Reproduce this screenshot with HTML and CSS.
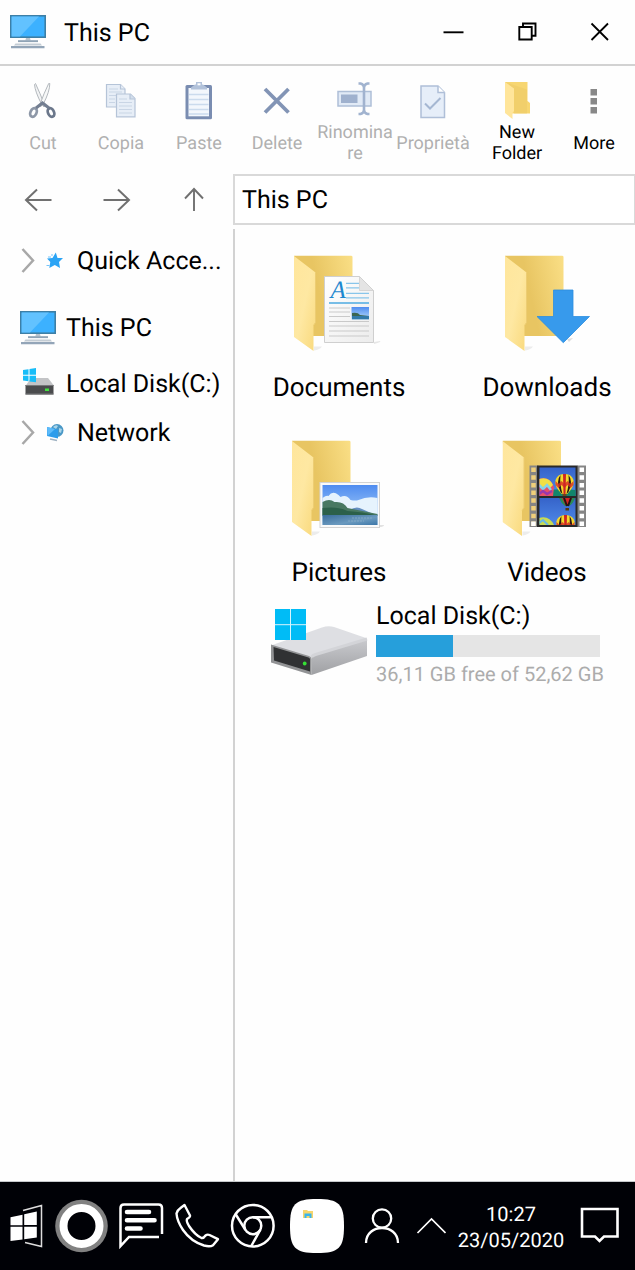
FILE: index.html
```html
<!DOCTYPE html>
<html lang="en">
<head>
<meta charset="utf-8">
<meta name="viewport" content="width=device-width, initial-scale=1">
<title>This PC</title>
<link rel="stylesheet" href="styles.css">
</head>
<body>
<svg class="defs" width="0" height="0" aria-hidden="true">
  <defs>
    <linearGradient id="back" x1="0" y1="0.3" x2="1" y2="0"><stop offset=".35" stop-color="#e8c562"/><stop offset="1" stop-color="#fadf86"/></linearGradient>
    <linearGradient id="flap" x1="0" y1="0" x2="1" y2="1"><stop offset="0" stop-color="#ffe69c"/><stop offset=".5" stop-color="#fee8a2"/><stop offset="1" stop-color="#f9d97c"/></linearGradient>
    <linearGradient id="sky" x1="0" y1="0" x2="0" y2="1"><stop offset="0" stop-color="#4f8cf0"/><stop offset="1" stop-color="#b8dcfa"/></linearGradient>
    <linearGradient id="lake" x1="0" y1="0" x2="1" y2="1"><stop offset="0" stop-color="#3a6d9c"/><stop offset=".6" stop-color="#6b9abf"/><stop offset="1" stop-color="#3d77a8"/></linearGradient>
    <linearGradient id="film" x1="0" y1="0" x2="0" y2="1"><stop offset="0" stop-color="#3562c8"/><stop offset="1" stop-color="#4f8bea"/></linearGradient>
    <linearGradient id="side" x1="0" y1="0" x2="0" y2="1"><stop offset="0" stop-color="#c9cace"/><stop offset="1" stop-color="#9fa0a3"/></linearGradient>
    <linearGradient id="paper" x1="0" y1="0" x2="1" y2="1"><stop offset="0" stop-color="#ffffff"/><stop offset="1" stop-color="#ececec"/></linearGradient>
    <symbol id="monitor" viewBox="0 0 36 34">
      <rect x="0" y="0" width="36" height="23" fill="#3d7fa6"/>
      <rect x="1.6" y="1.6" width="32.8" height="19.8" fill="#3cb1ff"/>
      <path d="M1.6 1.6H29L10 21.4H1.6Z" fill="#62c2ff"/>
      <path d="M16 23h4l.7 2.4h-5.4Z" fill="#b9c4ce"/>
      <path d="M8 25.2h20v1.9H8Z" fill="#8fa3b5"/>
      <path d="M5.500 28.400h25l1.500 2h-28Z" fill="#c3ccd4"/>
      <path d="M1 31h33.500v2.300H1Z" fill="#93a5b8"/>
    </symbol>
    <symbol id="folder" viewBox="0 0 60 97">
      <path d="M20 95q6-1 8-4h-8Z" fill="#ececec"/>
      <path d="M0 0H57q1.500 0 1.500 1.500V80.500H10Z" fill="url(#back)"/>
      <path d="M0 .5 21.500 17V67l-2 3V95.500L0 81.500Z" fill="url(#flap)"/>
      <path d="M21.500 17V67l-2 3" fill="none" stroke="#edcd73" stroke-width="1"/>
    </symbol>
    <g id="balloon">
      <path d="M0-10C7-10 10-5 9 0C8 5 4 8 3 10H-3C-4 8-8 5-9 0C-10-5-7-10 0-10Z" fill="#f4d72c"/>
      <path d="M-4-9Q-9-3-4 8L-2 10Q-5 0-4-9ZM4-9Q9-3 4 8L2 10Q5 0 4-9Z" fill="#2b1717"/>
      <path d="M-9-3l3 3 3-3 3 3 3-3 3 3 3-3v4l-3 3-3-3-3 3-3-3-3 3-3-3Z" fill="#d92d24" opacity=".8"/>
      <path d="M-1.500-10h3L1 10h-2Z" fill="#ce2525"/>
      <path d="M-2 10h4v3h-4Z" fill="#70471e"/>
    </g>
  </defs>
</svg>

<div class="window">
  <header class="titlebar">
    <svg class="pc-icon" aria-hidden="true"><use href="#monitor"/></svg>
    <h1 class="title">This PC</h1>
    <div class="controls">
      <button type="button" class="control" aria-label="Minimize"><svg class="glyph" viewBox="437 13 36 36"><path d="M443.500 31.300h20" stroke="#000" stroke-width="1.900"/></svg></button>
      <button type="button" class="control" aria-label="Restore"><svg class="glyph" viewBox="509 13 36 36"><path d="M519.300 26h12.400v12.500h-12.400ZM523 26v-3.500h12.500V34.800H532" fill="none" stroke="#000" stroke-width="1.900"/></svg></button>
      <button type="button" class="control" aria-label="Close"><svg class="glyph" viewBox="581 13 36 36"><path d="M591.500 22.500l16.500 16.500M608 22.500l-16.500 16.500" stroke="#000" stroke-width="1.800"/></svg></button>
    </div>
  </header>

  <div class="toolbar" role="toolbar" aria-label="File actions">
    <button type="button" class="tool" disabled>
      <svg class="tool-icon" viewBox="21 79 44 44" aria-hidden="true">
        <path d="M34.500 84.500q.5 7 7 19.500l2.500 3 .8-1.500Q40 93 35.500 83.500Z" fill="#f2f3f4" stroke="#b3b8bd" stroke-width="1"/>
        <path d="M49.800 83.500q0 8-6.500 20.500l-3 3-.8-1.500Q44 93 48.700 83.500Z" fill="#f7f8f8" stroke="#b3b8bd" stroke-width="1"/>
        <ellipse cx="33.500" cy="112.500" rx="3" ry="4.500" transform="rotate(25 33.500 112.500)" fill="none" stroke="#8d97a7" stroke-width="2.800"/>
        <ellipse cx="51" cy="112.500" rx="3" ry="4.500" transform="rotate(-25 51 112.500)" fill="none" stroke="#6b778b" stroke-width="2.800"/>
        <path d="M36 108l6.500-5 6.500 5" fill="none" stroke="#737e91" stroke-width="3"/>
      </svg>
      <span class="tool-label">Cut</span>
    </button>
    <button type="button" class="tool" disabled>
      <svg class="tool-icon" viewBox="99 79 44 44" aria-hidden="true">
        <g stroke="#b5c4d8" stroke-width="1.200" fill="#e7eef7">
          <path d="M106.500 84.500h14l4.500 4.500v18h-18.500Z"/><path d="M120.500 84.500v4.500h4.500"/>
          <path d="M109 89h9M109 92h13M109 95.500h13M109 99h6M109 102.500h6" stroke="#c9d5e5"/>
          <path d="M116.500 94h14l4.500 4.500v18.300h-18.500Z"/><path d="M130 94v5h5" fill="#d3deec"/>
          <path d="M119 99h8M119 102.500h13M119 106h13M119 109.500h13M119 113h13" stroke="#c9d5e5"/>
        </g>
      </svg>
      <span class="tool-label">Copia</span>
    </button>
    <button type="button" class="tool" disabled>
      <svg class="tool-icon" viewBox="177 79 44 44" aria-hidden="true">
        <rect x="185.500" y="85" width="26.500" height="34.300" rx="1.500" fill="#7a8db1"/>
        <path d="M188.500 88h20.500v28.300h-20.500Z" fill="#f3f7fc"/>
        <path d="M189 94.500h19.500M189 99.500h19.500M189 104.500h19.500M189 109.500h19.500M189 114h19.500" stroke="#cbdbed" stroke-width="1.600"/>
        <path d="M191 89.500v-2l4-3h1v-2.500h6v2.500h1l4 3v2Z" fill="#b2c2da"/>
        <path d="M197.500 83.300h3v2h-3Z" fill="#fff"/>
      </svg>
      <span class="tool-label">Paste</span>
    </button>
    <button type="button" class="tool" disabled>
      <svg class="tool-icon" viewBox="255 79 44 44" aria-hidden="true"><path d="M265 89l23.500 23.500M288.500 89L265 112.500" stroke="#8294b5" stroke-width="3.800"/></svg>
      <span class="tool-label">Delete</span>
    </button>
    <button type="button" class="tool" disabled>
      <svg class="tool-icon" viewBox="333 79 44 44" aria-hidden="true">
        <rect x="338" y="91.500" width="33" height="14.500" fill="#e1eaf6" stroke="#aebfd7" stroke-width="1.500"/>
        <rect x="341" y="94.500" width="16.500" height="8.500" fill="#9fb1ce"/>
        <path d="M358.500 83.500h2q3.500 1 3.500 4V110q0 3-3.500 4h-2M369.500 83.500h-2q-3.500 1-3.500 4M364 110q0 3 3.500 4h2" fill="none" stroke="#a1b3cf" stroke-width="2.600"/>
      </svg>
      <span class="tool-label">Rinominare</span>
    </button>
    <button type="button" class="tool" disabled>
      <svg class="tool-icon" viewBox="411 79 44 44" aria-hidden="true">
        <path d="M421 86h17l6.500 6.500v25H421Z" fill="#e6eef9" stroke="#afbfd8" stroke-width="1.500"/>
        <path d="M438 86v6.500h6.500" fill="#fff" stroke="#afbfd8" stroke-width="1.500"/>
        <path d="M425 103.500l5 5 10.500-10.500" fill="none" stroke="#a5b7d2" stroke-width="2"/>
      </svg>
      <span class="tool-label">Proprietà</span>
    </button>
    <button type="button" class="tool">
      <svg class="tool-icon" viewBox="495 79 44 44" aria-hidden="true">
        <path d="M505 82h22.500v19l2.500 2v10.500h-20Z" fill="#f7d671"/>
        <path d="M505 82l9 7v24.500h13v-24" fill="#eccb66" opacity=".55"/>
        <path d="M505 82l9 6.500V111l-1.500 2v6L505 113Z" fill="#ffe59a"/>
      </svg>
      <span class="tool-label">New Folder</span>
    </button>
    <button type="button" class="tool">
      <svg class="tool-icon" viewBox="572 79 44 44" aria-hidden="true"><path d="M590.500 89h6.500v6.500h-6.500ZM590.500 98h6.500v6.500h-6.500ZM590.500 107h6.500v6.500h-6.500Z" fill="#888"/></svg>
      <span class="tool-label">More</span>
    </button>
  </div>

  <div class="address-row">
    <nav class="history" aria-label="History">
      <button type="button" class="arrow" aria-label="Back"><svg class="glyph" viewBox="21 182 36 36"><path d="M52.500 200H27M38 189.500L27 200l11 10.500" fill="none" stroke="#707070" stroke-width="2"/></svg></button>
      <button type="button" class="arrow" aria-label="Forward"><svg class="glyph" viewBox="98 182 36 36"><path d="M103.500 200H129M118 189.500L129 200l-11 10.500" fill="none" stroke="#707070" stroke-width="2"/></svg></button>
      <button type="button" class="arrow" aria-label="Up"><svg class="glyph" viewBox="176 182 36 36"><path d="M194 211V189M185 198.500l9-9.500 9 9.500" fill="none" stroke="#707070" stroke-width="1.900"/></svg></button>
    </nav>
    <input class="address" type="text" value="This PC" aria-label="Address">
  </div>

  <div class="body">
    <nav class="sidebar" aria-label="Folders">
      <a class="branch" href="#quick">
        <svg class="branch-icon" viewBox="20 244 48 34" aria-hidden="true">
          <path d="M22.500 249l10.500 11.500L22.500 272" fill="none" stroke="#a8a8a8" stroke-width="2.500"/>
          <path d="M55.800 252.500l1.700 5.500h5.500l-4 4 1 6-5.200-3-5.500 3 1-6-3.300-3.500 5.500-.5Z" fill="#2ba4f5"/>
          <path d="M48 257h3M46.500 265.500h3M51 255h2" stroke="#74c4fa" stroke-width="1"/>
        </svg>
        <span class="place-text">Quick Acce...</span>
      </a>
      <a class="place" href="#pc">
        <svg class="pc-icon" aria-hidden="true"><use href="#monitor"/></svg>
        <span class="place-text">This PC</span>
      </a>
      <a class="place" href="#disk">
        <svg class="pc-icon" viewBox="20 366 36 34" aria-hidden="true">
          <path d="M31 377h17l5.500 7v1h-28Z" fill="#c3c4c6"/>
          <rect x="25.500" y="384" width="28" height="9.500" fill="#4a4b4d"/>
          <path d="M25.500 384.500h28M25.500 393h28" stroke="#77787a" stroke-width="1"/>
          <rect x="45" y="387.500" width="4" height="2.500" fill="#41e33f"/>
          <path d="M23 369l5.500-.8v5.500H23ZM29.500 368l6.500-1v6.700h-6.500ZM23 374.800h5.500v5.400l-5.500-.7ZM29.500 374.800H36v6.400l-6.500-.8Z" fill="#18bdf8"/>
        </svg>
        <span class="place-text">Local Disk(C:)</span>
      </a>
      <a class="branch branch-last" href="#network">
        <svg class="branch-icon" viewBox="20 416 48 34" aria-hidden="true">
          <path d="M22.500 421l10.500 11.500L22.500 444" fill="none" stroke="#a8a8a8" stroke-width="2.500"/>
          <circle cx="57" cy="430.500" r="6.500" fill="#4a98c6"/>
          <path d="M53 427q3-3 5-1l-2 3ZM59 428l3 1-1 4-2-1Z" fill="#a9d5ea"/>
          <path d="M47 427l11 2.500v9l-11-2.500Z" fill="#2c9ceb"/>
          <path d="M47 427l8 2-7.500 7Z" fill="#5dbbfa"/>
          <path d="M50 439l7 1.500" stroke="#9fb2c2" stroke-width="1.500"/>
        </svg>
        <span class="place-text">Network</span>
      </a>
    </nav>

    <main class="content">
      <div class="folders">
        <a class="folder" href="#documents">
          <svg class="folder-icon" viewBox="291 255 96 100" aria-hidden="true">
            <use href="#folder" x="294" y="255.500" width="60" height="97"/>
            <path d="M374 342l6-1q2 1-6 3Z" fill="#e6e6e6"/>
            <path d="M324.500 276.500h35l14 14v52h-49Z" fill="url(#paper)" stroke="#cfcfcf" stroke-width="1"/>
            <path d="M359.500 276.500v14h14Z" fill="#e4e4e4" stroke="#cfcfcf" stroke-width=".8"/>
            <text class="doc-letter" x="330.500" y="298">A</text>
            <path d="M346 283.300h13M346 287.800h13M346 293.300h23M346 297.800h23" stroke="#88c5ea" stroke-width="1.200"/>
            <path d="M329 303h40" stroke="#77bde6" stroke-width="1.900"/>
            <path d="M329 308h21M329 312h21M329 316.500h21M329 321.500h40M329 326h40M329 331h40M329 336h40" stroke="#c9c9c9" stroke-width="1.200"/>
            <rect x="351.500" y="307" width="17.500" height="12.500" fill="url(#sky)"/>
            <path d="M352 313q6-1 8 2l9 1v1h-17Z" fill="#3c6651"/><path d="M352 316h17v3.300h-17Z" fill="#327aa9"/>
          </svg>
          <span class="folder-label">Documents</span>
        </a>
        <a class="folder" href="#downloads">
          <svg class="folder-icon" viewBox="499 255 96 100" aria-hidden="true">
            <use href="#folder" x="505" y="255.500" width="60" height="97"/>
            <path d="M567 339l6-1-4 4Z" fill="#ddd"/>
            <path d="M553.500 290h19.500v26.500h16.500L563.300 342.700 537 316.500h16.500Z" fill="#379aec" stroke="#2c8ee0" stroke-width=".8"/>
          </svg>
          <span class="folder-label">Downloads</span>
        </a>
        <a class="folder" href="#pictures">
          <svg class="folder-icon" viewBox="291 440 96 100" aria-hidden="true">
            <use href="#folder" x="292" y="440.500" width="60" height="97"/>
            <path d="M379 525h5q0 2-5 2Z" fill="#e2e2e2"/>
            <rect x="320" y="482.500" width="59.500" height="45" fill="#fafafa" stroke="#d3d3d3" stroke-width="1"/>
            <rect x="322.500" y="485" width="55" height="40" fill="url(#sky)"/>
            <path d="M322.500 498q4-3 6-2 4-6 10-1l2 2q6-3 10 3 5 1 8 0 9-4 19-2v16h-55Z" fill="#e6f3fd"/>
            <path d="M348 511q8-6 14-2l9 4h-23Z" fill="#658fc1"/>
            <path d="M322.500 502q7-4 12 0 9-1 13 6l30 6v2h-55Z" fill="#487862"/>
            <path d="M322.500 508q16-2 25 3 16 1 27 4h-52Z" fill="#2c604a"/>
            <rect x="322.500" y="515" width="55" height="10" fill="url(#lake)"/>
            <path d="M352 518h20M348 521h16" stroke="#8fb2cc" stroke-width=".7" stroke-dasharray="2 1"/>
          </svg>
          <span class="folder-label">Pictures</span>
        </a>
        <a class="folder" href="#videos">
          <svg class="folder-icon" viewBox="499 440 96 100" aria-hidden="true">
            <use href="#folder" x="502.500" y="440.500" width="60" height="97"/>
            <path d="M529.500 465.500h9v61.500h-9ZM577 465.500h9v61.500h-9Z" fill="#858585"/>
            <path d="M533.500 467.500v60" stroke="#efcf7a" stroke-width="4.500" stroke-dasharray="4.500 3.200"/>
            <path d="M531.200 521.500h4.500v4.500h-4.500Z" fill="#fff"/>
            <path d="M581.800 467.500v60" stroke="#fff" stroke-width="4.500" stroke-dasharray="4.500 3.200"/>
            <rect x="537" y="465.500" width="40.500" height="61.500" fill="#292929"/>
            <svg x="539.500" y="467.500" width="36" height="28.500" viewBox="539.500 467.500 36 28.500">
              <rect x="539" y="467" width="37" height="30" fill="url(#film)"/>
              <path d="M539 491q18-3 37-1v7h-37Z" fill="#12866b"/>
              <path d="M539 479q11-3 15 8l-1 9h-14Z" fill="#e65069"/>
              <path d="M539 479q10-3 14 6l-3 3-3-4-4 4-4-4Z" fill="#f1df43"/>
              <path d="M539 485l4 4 4-4 4 5" fill="none" stroke="#85d3e9" stroke-width="2.500"/>
              <path d="M539 494l4-3 4 3 5-3" fill="none" stroke="#9a38ae" stroke-width="2.500"/>
              <use href="#balloon" x="564.500" y="484"/>
            </svg>
            <svg x="539.500" y="498" width="36" height="27" viewBox="539.500 498 36 27">
              <rect x="539" y="497" width="37" height="30" fill="url(#film)"/>
              <path d="M559 498h16q-2 6-6 8h-4q-4-3-6-8Z" fill="#2a8b57"/>
              <path d="M562 498h10l-4 8h-2Z" fill="#d52626"/><path d="M564 498l3 8M571 498l-3 8" stroke="#241515" stroke-width="2"/>
              <path d="M565.500 508h3.500v2.500h-3.500Z" fill="#56370f"/>
              <path d="M539 518q10-3 15 7h-15Z" fill="#c8db52"/><path d="M539 523l4-3 5 5" fill="none" stroke="#66b9ea" stroke-width="2"/>
              <use href="#balloon" x="565.500" y="525"/>
            </svg>
          </svg>
          <span class="folder-label">Videos</span>
        </a>
      </div>

      <section class="disk" aria-labelledby="disk-name">
        <svg class="disk-icon" viewBox="270 606 100 72" aria-hidden="true">
          <path d="M271 645.500l51-18q6-2 12-.5L366 638q1.500 1 1 2.500L313 658Z" fill="#dedfe3"/>
          <path d="M311.500 656.500L367 639.500V656L311.500 675Z" fill="url(#side)"/>
          <path d="M311.500 657q1-1.500 4-2.500L367 639" fill="none" stroke="#d3d4d8" stroke-width="3"/>
          <path d="M271 644.500l38 11.500q2.500 1 2.500 3v16L271 662.500Z" fill="#929395"/>
          <path d="M273.500 647l35 10.500q1.500.5 1.500 2v12L274 660.500Z" fill="#303133"/>
          <circle cx="304.700" cy="663.500" r="1.900" fill="#35df35"/>
          <path d="M275 609h31v31h-31Z" fill="#00bcf6"/>
          <path d="M290.500 609v31M275 624.700h31" stroke="#d8f4fd" stroke-width="1"/>
        </svg>
        <div class="disk-info">
          <h2 class="disk-name" id="disk-name">Local Disk(C:)</h2>
          <progress class="usage" value="34.4" max="100" aria-labelledby="disk-name"></progress>
          <p class="disk-free">36,11 GB free of 52,62 GB</p>
        </div>
      </section>
    </main>
  </div>
</div>

<footer class="taskbar">
  <div class="apps">
    <button type="button" class="task" aria-label="Start"><svg width="34" height="54" viewBox="10 1199 34 54">
      <path d="M10.500 1217.300l12-2.600v10.500h-12ZM24.200 1214.200l12.600-2.700v13.600H24.200ZM10.500 1226.700h12v12.800l-12 1.500ZM24.200 1226.700h12.600v10.800l-12.600 1.800Z" fill="#fff"/>
      <path d="M23 1210.500l18.500-5v41l-16.500-4" fill="none" stroke="#ddd" stroke-width="1.500"/>
    </svg></button>
    <button type="button" class="task" aria-label="Assistant"><svg width="54" height="54" viewBox="54 1199 54 54"><circle cx="81.500" cy="1226" r="26.300" fill="#818181"/><circle cx="81.500" cy="1226" r="18" fill="#000106" stroke="#fff" stroke-width="8"/></svg></button>
    <button type="button" class="task" aria-label="Messages"><svg width="46" height="54" viewBox="118 1199 46 54">
      <path d="M162 1234v-26q0-3.500-3.500-3.500H124q-3.500 0-3.500 3.500v38l8.500-9h30" fill="none" stroke="#fff" stroke-width="2.500"/>
      <path d="M127 1212h22M127 1220.300h27.500M127 1228.500h13.500" stroke="#fff" stroke-width="4.600" stroke-linecap="round"/>
    </svg></button>
    <button type="button" class="task" aria-label="Phone"><svg width="46" height="54" viewBox="174 1199 46 54">
      <path d="M184.500 1205l5.500 10.500q.5 1.500-3 3.500-1 2 2 7 6 9 12.500 12 2 .5 4-2.500 2-1.500 4-.5l8.500 4.200-5 6q-3 2-9 .3-13-4-21-15.500-6-9-6.500-16.500.5-3 4-5.500Z" fill="none" stroke="#fff" stroke-width="2.400" stroke-linejoin="round"/>
    </svg></button>
    <button type="button" class="task" aria-label="Browser"><svg width="46" height="54" viewBox="230 1199 46 54">
      <g fill="none" stroke="#fff" stroke-width="2.500"><circle cx="252.800" cy="1225.700" r="20.800"/><circle cx="252.800" cy="1225.700" r="8.500"/><path d="M253 1217.200h19M245.500 1230L235.500 1214M260.500 1229.500L251 1246.500"/></g>
    </svg></button>
    <button type="button" class="task task-app" aria-label="File Explorer"><svg width="54" height="54" viewBox="290 1199 54 54">
      <path d="M317 1199C339 1199 344 1204 344 1226S339 1253 317 1253 290 1248 290 1226 295 1199 317 1199Z" fill="#fff"/>
      <path d="M303 1210h4l1 1h5v7h-10Z" fill="#f7d56b"/><path d="M304.500 1213.500h7v4.500h-2v-2h-3v2h-2Z" fill="#38b5ee"/>
    </svg></button>
  </div>
  <div class="tray">
    <button type="button" class="task" aria-label="Account"><svg width="40" height="54" viewBox="364 1199 40 54"><g fill="none" stroke="#fff" stroke-width="2.300"><circle cx="382" cy="1218.500" r="9.200"/><path d="M366 1243c0-20 32-20 32 0"/></g></svg></button>
    <button type="button" class="task" aria-label="Show hidden icons"><svg width="30" height="54" viewBox="416 1199 30 54"><path d="M417.500 1233l14-14 14 14" fill="none" stroke="#fff" stroke-width="1.700"/></svg></button>
    <time class="clock" datetime="2020-05-23T10:27"><span>10:27</span><span>23/05/2020</span></time>
    <button type="button" class="task" aria-label="Notifications"><svg width="44" height="54" viewBox="576 1199 44 54"><path d="M582 1209h35.500v27.500h-13.500l-4.500 4.500-4.500-4.500h-13Z" fill="none" stroke="#fff" stroke-width="2.600"/></svg></button>
  </div>
</footer>
</body>
</html>
```

FILE: styles.css
```css
* {
  box-sizing: border-box;
}

body {
  margin: 0;
  min-height: 100vh;
  display: flex;
  flex-direction: column;
  background: #fefefe;
  color: #000;
  font-family: Roboto, "Liberation Sans", sans-serif;
  font-size: 25px;
  line-height: 32px;
  text-rendering: geometricPrecision;
}

.defs {
  position: absolute;
}

button {
  padding: 0;
  border: 0;
  background: none;
  color: inherit;
  font: inherit;
  text-rendering: inherit;
}

a {
  color: inherit;
  text-decoration: none;
}

svg {
  display: block;
  flex: none;
}

.window {
  flex: 1;
  display: flex;
  flex-direction: column;
}

.titlebar {
  display: flex;
  align-items: center;
  height: 66px;
  padding-left: 10px;
  border-bottom: 2px solid #d2d2d2;
}

.pc-icon {
  width: 36px;
  height: 34px;
}

.title {
  margin: 4px 0 0 18px;
  font-size: 25px;
  font-weight: 400;
}

.controls {
  display: flex;
  margin-left: auto;
}

.control {
  display: flex;
  justify-content: center;
  width: 72px;
}

.glyph {
  width: 36px;
  height: 36px;
}

.toolbar {
  display: grid;
  grid-template-columns: repeat(6, 78fr) 90fr 64fr;
  height: 108px;
  padding: 13px 9px 0 4px;
}

.tool {
  display: flex;
  flex-direction: column;
  align-items: center;
  min-width: 0;
  font-size: 18px;
  line-height: 21px;
}

.tool:disabled {
  color: #b0b0b0;
}

.tool-icon {
  width: 44px;
  height: 44px;
}

.tool-label {
  display: flex;
  align-items: center;
  justify-content: center;
  height: 40px;
  max-width: 76px;
  overflow-wrap: anywhere;
}

.address-row {
  display: flex;
  height: 51px;
  margin-bottom: 4px;
}

.history {
  flex: none;
  display: flex;
  align-items: center;
  gap: 42px;
  width: 233px;
  padding-left: 20px;
}

.address {
  flex: 1;
  min-width: 0;
  padding: 2px 7px 0;
  border: 2px solid #d9d9d9;
  border-right-width: 1px;
  background: #fff;
  color: inherit;
  font: inherit;
  text-rendering: inherit;
}

.body {
  flex: 1;
  display: flex;
}

.sidebar {
  flex: none;
  width: 235px;
  padding: 7px 8px 0 20px;
  border-right: 2px solid #d2d2d2;
}

.branch,
.place {
  display: flex;
  align-items: center;
  height: 56px;
  gap: 10px;
  white-space: nowrap;
}

.branch {
  height: 50px;
  gap: 9px;
  margin-bottom: 14px;
}

.branch-last {
  height: 42px;
}

.branch-icon {
  width: 48px;
  height: 34px;
}

.place-text {
  padding-top: 2px;
}

.content {
  flex: 1;
  min-width: 0;
}

.folders {
  display: grid;
  grid-template-columns: 1fr 1fr;
  gap: 35px 48px;
  padding: 26px 8px 11px 24px;
}

.folder {
  display: flex;
  flex-direction: column;
  align-items: center;
  gap: 16px;
  font-size: 26px;
  line-height: 34px;
}

.folder-icon {
  width: 96px;
  height: 100px;
}

.doc-letter {
  fill: #1e88cf;
  font: italic 25px "Liberation Serif", serif;
}

.disk {
  display: flex;
  align-items: flex-start;
  gap: 6px;
  padding: 0 35px 0 35px;
}

.disk-icon {
  width: 100px;
  height: 72px;
  margin-top: 5px;
}

.disk-info {
  flex: 1;
  min-width: 0;
}

.disk-name {
  margin: 0 0 2px;
  font-size: 25px;
  font-weight: 400;
}

.usage {
  display: block;
  width: 100%;
  height: 22px;
  border: 0;
  appearance: none;
  background: #e5e5e5;
}

.usage::-webkit-progress-bar {
  background: #e5e5e5;
}

.usage::-webkit-progress-value {
  background: #269fdb;
}

.disk-free {
  margin: 5px 0 0;
  color: #acacac;
  font-size: 20px;
  line-height: 24px;
  white-space: nowrap;
}

.taskbar {
  display: flex;
  align-items: center;
  justify-content: space-between;
  height: 89px;
  padding: 0 15px 0 10px;
  border-top: 1px solid #c6c9cb;
  background: #000106;
  color: #fff;
}

.apps,
.tray {
  display: flex;
  align-items: center;
  gap: 10px;
}

.tray {
  gap: 12px;
}

.task-app {
  margin-left: 4px;
}

.clock {
  display: flex;
  flex-direction: column;
  align-items: center;
  width: 106px;
  padding-top: 2px;
  font-size: 20px;
  line-height: 26px;
}
```
